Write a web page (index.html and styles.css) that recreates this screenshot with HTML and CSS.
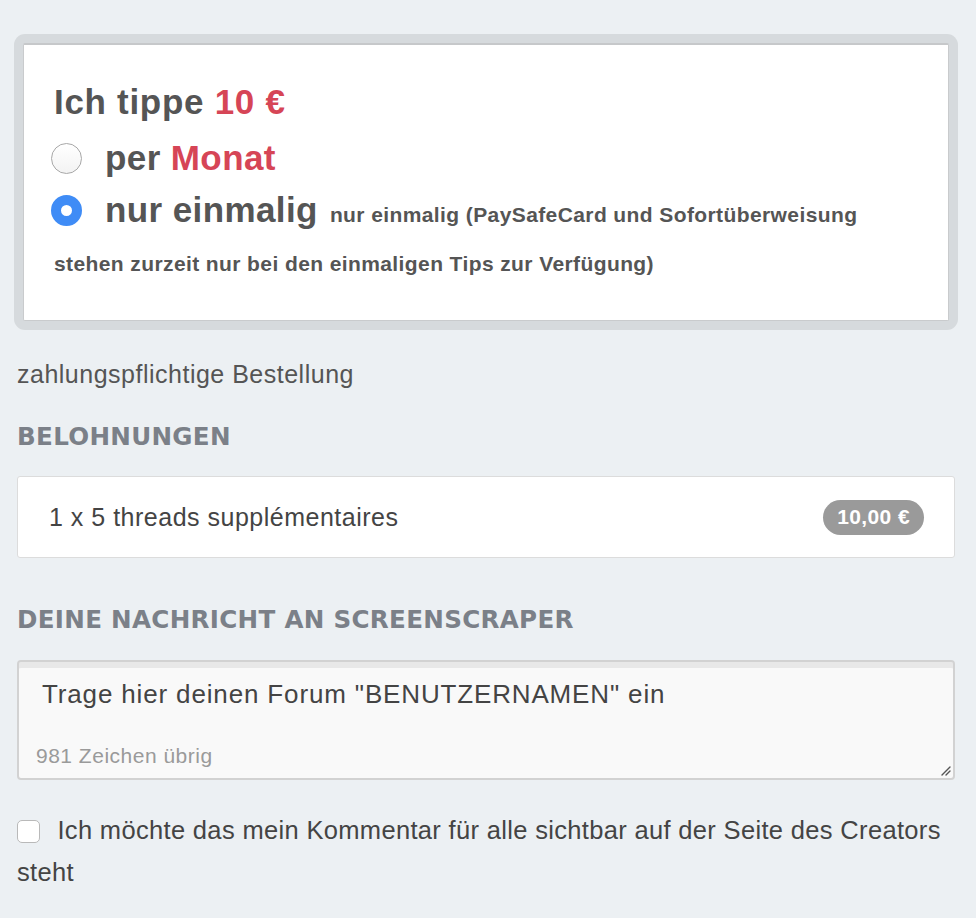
FILE: index.html
```html
<!DOCTYPE html>
<html lang="de">
<head>
<meta charset="utf-8">
<title>Tip</title>
<link rel="stylesheet" href="styles.css">
</head>
<body>
<main class="page">
  <section class="tip-card">
    <div class="tip-inner">
      <h2 class="tip-title">Ich tippe <span class="red">10 €</span></h2>
      <div class="radio-row">
        <span class="radio"></span>
        <span class="radio-label">per <span class="red">Monat</span></span>
      </div>
      <div class="radio-row radio-row-wrap">
        <span class="radio checked"></span>
        <span class="radio-label">nur einmalig</span>
        <span class="radio-note">nur einmalig (PaySafeCard und Sofortüberweisung</span>
      </div>
      <p class="radio-note note-cont">stehen zurzeit nur bei den einmaligen Tips zur Verfügung)</p>
    </div>
  </section>

  <p class="plain">zahlungspflichtige Bestellung</p>

  <h3 class="section-title">BELOHNUNGEN</h3>
  <div class="reward">
    <span class="reward-name">1 x 5 threads supplémentaires</span>
    <span class="badge">10,00 €</span>
  </div>

  <h3 class="section-title title-msg">DEINE NACHRICHT AN SCREENSCRAPER</h3>
  <div class="message">
    <div class="message-text">Trage hier deinen Forum "BENUTZERNAMEN" ein</div>
    <div class="counter">981 Zeichen übrig</div>
    <svg class="grip" width="12" height="12" viewBox="0 0 12 12"><path d="M11 3 L3 11 M11 7 L7 11" stroke="#555" stroke-width="1.4" stroke-linecap="round" fill="none"/></svg>
  </div>

  <label class="consent">
    <span class="checkbox"></span>
    <span class="consent-text">Ich möchte das mein Kommentar für alle sichtbar auf der Seite des Creators steht</span>
  </label>
</main>
</body>
</html>
```

FILE: styles.css
```css
* { box-sizing: border-box; }
html, body { margin: 0; padding: 0; }
body {
  background: #ecf0f3;
  font-family: "Liberation Sans", Arial, sans-serif;
  color: #555;
}
.page {
  padding: 34px 21px 0 17px;
}
.tip-card {
  margin: 0 -3px;
  background: #d6dadd;
  border-radius: 11px;
  padding: 9px;
}
.tip-inner {
  background: #fff;
  border: 1px solid #c9cbcd;
  border-top: 2px solid #c6c8ca;
  border-radius: 2px;
  padding: 37px 30px 41px 30px;
}
.tip-title {
  margin: 0;
  font-size: 35px;
  font-weight: bold;
  letter-spacing: 0.7px;
  line-height: 40px;
  color: #555;
}
.red { color: #d64556; }
.radio-row {
  display: flex;
  align-items: center;
  margin-top: 16px;
  height: 40px;
}
.radio-row + .radio-row { margin-top: 12px; }
.radio {
  width: 31px;
  height: 31px;
  border-radius: 50%;
  border: 1px solid #a8a8a8;
  background: linear-gradient(#fff, #f3f3f3);
  flex: none;
  margin: 0 23px 0 -3px;
}
.radio.checked {
  border: 10.5px solid #3f8cf6;
  background: #fff;
}
.radio-label {
  font-size: 35px;
  font-weight: bold;
  letter-spacing: 0.4px;
  line-height: 40px;
}
.radio-row-wrap { align-items: baseline; }
.radio-row-wrap .radio { align-self: center; }
.radio-note {
  font-size: 21px;
  font-weight: bold;
  letter-spacing: 0.4px;
  margin-left: 12px;
}
.note-cont {
  margin: 19px 0 0 0;
  line-height: 30px;
}
.plain {
  margin: 29px 0 0 0;
  font-size: 25px;
  letter-spacing: 0.5px;
  line-height: 30px;
  color: #555;
}
.section-title {
  margin: 33px 0 0 0;
  font-family: "DejaVu Sans", sans-serif;
  font-weight: bold;
  font-size: 24.6px;
  line-height: 30px;
  color: #7b8088;
  letter-spacing: 0.3px;
}
.reward {
  margin-top: 24px;
  background: #fff;
  border: 1px solid #dcdcdc;
  border-radius: 3px;
  height: 82px;
  display: flex;
  align-items: center;
  justify-content: space-between;
  padding: 0 30px 0 31px;
}
.reward-name {
  font-size: 25px;
  letter-spacing: 0.5px;
  color: #444;
}
.badge {
  background: #9a9a9a;
  color: #fff;
  font-weight: bold;
  font-size: 21px;
  letter-spacing: 0.4px;
  border-radius: 18px;
  padding: 5px 14px 6px;
  line-height: 24px;
}
.title-msg { margin-top: 47px; }
.message {
  position: relative;
  margin-top: 25px;
  height: 120px;
  background: #f9f9f9;
  border: 2px solid #d2d2d2;
  border-radius: 4px;
  box-shadow: inset 0 7px 0 -1px #e8e8e8;
  padding: 17px 20px 0 23px;
}
.message-text {
  font-size: 26px;
  letter-spacing: 0.85px;
  color: #444;
  line-height: 30px;
}
.counter {
  margin: 35px 0 0 -6px;
  font-size: 21px;
  letter-spacing: 0.5px;
  color: #9a9a9a;
}
.grip {
  position: absolute;
  right: 2px;
  bottom: 2px;
}
.consent {
  display: block;
  margin-top: 29px;
  font-size: 25.5px;
  letter-spacing: 0.33px;
  line-height: 42px;
  color: #444;
}
.checkbox {
  display: inline-block;
  width: 23px;
  height: 23px;
  border: 1px solid #b9b9b9;
  border-radius: 5px;
  background: #fff;
  vertical-align: -4px;
  margin-right: 10px;
}
```
